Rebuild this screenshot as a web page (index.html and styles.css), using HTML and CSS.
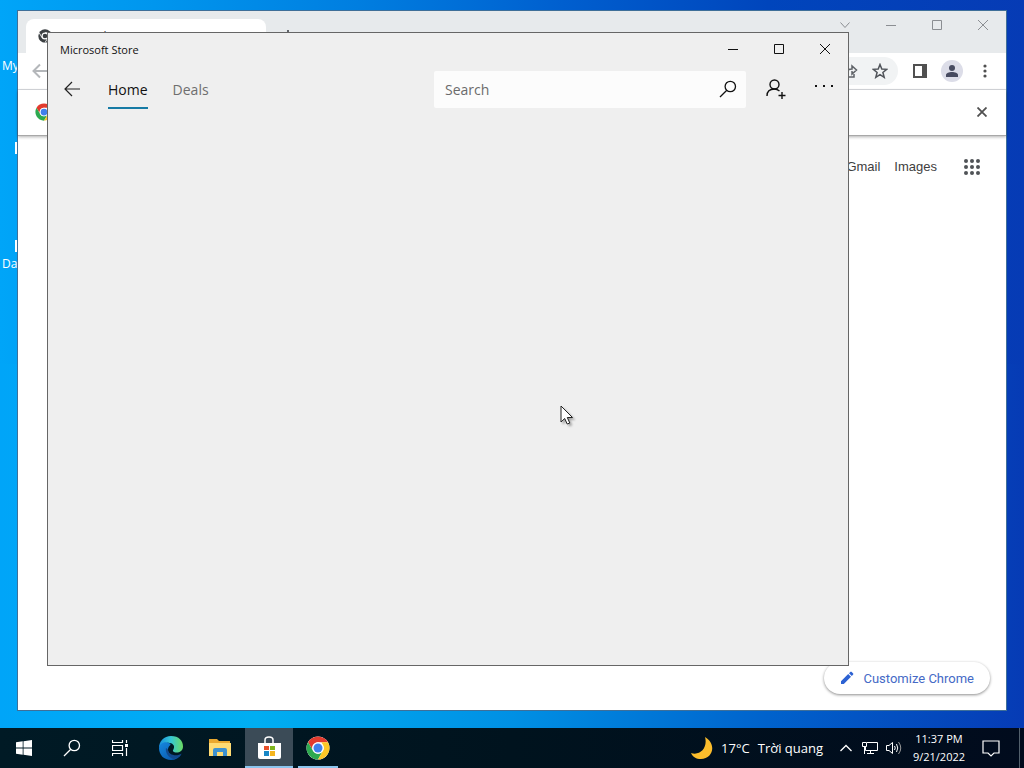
FILE: index.html
```html
<!DOCTYPE html>
<html lang="en">
<head>
  <meta charset="UTF-8" />
  <meta name="viewport" content="width=device-width, initial-scale=1.0" />
  <title>Desktop</title>
  <link rel="stylesheet" href="styles.css">
</head>
<body>
  <!-- Shared icons -->
  <svg class="sprite" aria-hidden="true">
    <symbol id="chrome-logo" viewBox="0 0 48 48">
      <circle cx="24" cy="24" r="23" fill="#fff"/>
      <path d="M4.1 12.5A23 23 0 0 1 43.9 12.5H24A11.5 11.5 0 0 0 14 29.7Z" fill="#e33b2e"/>
      <path d="M4.1 12.5L14 29.7A11.5 11.5 0 0 0 34 29.7L24 47A23 23 0 0 1 4.1 12.5Z" fill="#2da94f"/>
      <path d="M24 47L34 29.7A11.5 11.5 0 0 0 34 18.3L31 12.5H43.9A23 23 0 0 1 24 47Z" fill="#fdc727"/>
      <circle cx="24" cy="24" r="11.5" fill="#fff"/>
      <circle cx="24" cy="24" r="9" fill="#3f80ec"/>
    </symbol>
    <symbol id="minimize" viewBox="0 0 12 12"><path d="M1 6.5H11" fill="none" stroke="currentColor"/></symbol>
    <symbol id="maximize" viewBox="0 0 12 12"><path d="M1.500 1.500H10.500V10.500H1.500Z" fill="none" stroke="currentColor"/></symbol>
    <symbol id="close" viewBox="0 0 12 12"><path d="M1 1L11 11M11 1L1 11" fill="none" stroke="currentColor"/></symbol>
    <symbol id="search" viewBox="0 0 18 18"><path d="M1 17L7.300 10.700M16.500 6.500A5.200 5.200 0 1 1 6.100 6.500A5.200 5.200 0 1 1 16.500 6.500Z" fill="none" stroke="currentColor" stroke-width="1.300"/></symbol>
  </svg>

  <main class="desktop">
    <div class="shortcuts">
      <span class="shortcut">My</span>
      <span class="shortcut plain"></span>
      <span class="shortcut">Da</span>
    </div>

    <section class="browser" aria-label="Chrome">
      <div class="tabstrip">
        <div class="tab">
          <svg width="14" height="14" viewBox="0 0 48 48"><circle cx="24" cy="24" r="23" fill="#3c4043"/><circle cx="24" cy="24" r="10" fill="none" stroke="#fff" stroke-width="4"/><path d="M24 13H45M14 30L4 13M34 30L24 47" stroke="#fff" stroke-width="3"/></svg>
          <span>New Tab</span>
        </div>
        <button class="new-tab" aria-label="New tab"><svg width="12" height="12" viewBox="0 0 12 12"><path d="M6 0V12M0 6H12" stroke="#5f6368" stroke-width="2"/></svg></button>
        <div class="caption">
          <button aria-label="Search tabs"><svg width="12" height="12" viewBox="0 0 12 12"><path d="M1.500 3.500L6 8.500L10.500 3.500" fill="none" stroke="currentColor"/></svg></button>
          <button aria-label="Minimize"><svg width="12" height="12"><use href="#minimize"/></svg></button>
          <button aria-label="Maximize"><svg width="12" height="12"><use href="#maximize"/></svg></button>
          <button aria-label="Close"><svg width="12" height="12"><use href="#close"/></svg></button>
        </div>
      </div>
      <div class="toolbar">
        <button class="back" aria-label="Back"><svg width="16" height="16" viewBox="0 0 16 16"><path d="M15 8H2M8 1.500L1.500 8L8 14.500" fill="none" stroke="#b4b7ba" stroke-width="2"/></svg></button>
        <div class="omnibox">
          <button aria-label="Share"><svg width="16" height="16" viewBox="0 0 16 16"><path d="M6 3H2V14H12V11M5 10C5 7 7 6 10 6V3L14.500 7L10 11V8" fill="none" stroke="#5f6368" stroke-width="1.500"/></svg></button>
          <button aria-label="Bookmark"><svg width="16" height="16" viewBox="0 0 16 16"><path d="M8 1.500L9.800 6L14.700 6.300L10.900 9.500L12.200 14.300L8 11.600L3.800 14.300L5.100 9.500L1.300 6.300L6.200 6Z" fill="none" stroke="#50545a" stroke-width="1.500"/></svg></button>
        </div>
        <button class="panel" aria-label="Side panel"><svg width="16" height="16" viewBox="0 0 16 16"><path d="M1 1H15V15H1Z" fill="#505050"/><path d="M3 3H10V13H3Z" fill="#fff"/></svg></button>
        <button class="avatar" aria-label="Profile"><svg width="14" height="14" viewBox="0 0 14 14"><circle cx="7" cy="4" r="3" fill="#474b60"/><path d="M1 13V11C1 9 4 8 7 8S13 9 13 11V13Z" fill="#474b60"/></svg></button>
        <button class="menu" aria-label="Menu"><svg width="4" height="14" viewBox="0 0 4 14"><g fill="#505050"><circle cx="2" cy="2" r="1.600"/><circle cx="2" cy="7" r="1.600"/><circle cx="2" cy="12" r="1.600"/></g></svg></button>
      </div>
      <div class="infobar">
        <svg width="18" height="18"><use href="#chrome-logo"/></svg>
        <button aria-label="Dismiss"><svg width="10" height="10" viewBox="0 0 10 10"><path d="M0.500 0.500L9.500 9.500M9.500 0.500L0.500 9.500" stroke="#505050" stroke-width="1.800"/></svg></button>
      </div>
      <nav class="google-links">
        <a href="#">Gmail</a>
        <a href="#">Images</a>
        <button aria-label="Google apps"><svg width="16" height="16" viewBox="0 0 16 16"><g fill="#505357"><circle cx="2" cy="2" r="2"/><circle cx="8" cy="2" r="2"/><circle cx="14" cy="2" r="2"/><circle cx="2" cy="8" r="2"/><circle cx="8" cy="8" r="2"/><circle cx="14" cy="8" r="2"/><circle cx="2" cy="14" r="2"/><circle cx="8" cy="14" r="2"/><circle cx="14" cy="14" r="2"/></g></svg></button>
      </nav>
      <button class="customize">
        <svg width="14" height="14" viewBox="0 0 14 14"><path d="M1 10.200V13H3.800L11 5.800L8.200 3ZM9 2.200L10.500 0.800Q11 0.500 11.500 0.800L13.200 2.500Q13.500 3 13.200 3.500L11.800 5Z" fill="#2d62d3"/></svg>
        Customize Chrome
      </button>
    </section>

    <section class="store" aria-label="Microsoft Store">
      <header class="titlebar">
        <span>Microsoft Store</span>
        <div class="caption">
          <button aria-label="Minimize"><svg width="12" height="12"><use href="#minimize"/></svg></button>
          <button aria-label="Maximize"><svg width="12" height="12"><use href="#maximize"/></svg></button>
          <button aria-label="Close"><svg width="12" height="12"><use href="#close"/></svg></button>
        </div>
      </header>
      <div class="store-nav">
        <button class="icon-button" aria-label="Back"><svg width="16" height="16" viewBox="0 0 16 16"><path d="M16 8H1M8 1L1 8L8 15" fill="none" stroke="#222" stroke-width="1.200"/></svg></button>
        <nav class="store-tabs">
          <a class="active" href="#">Home</a>
          <a href="#">Deals</a>
        </nav>
        <form class="search-box">
          <input type="text" placeholder="Search" aria-label="Search" />
          <button type="button" aria-label="Submit search"><svg width="18" height="18"><use href="#search"/></svg></button>
        </form>
        <button class="icon-button" aria-label="Sign in"><svg width="20" height="20" viewBox="0 0 20 20"><g fill="none" stroke="#111" stroke-width="1.400"><circle cx="8.500" cy="5.500" r="4.500"/><path d="M1 17C1 12.500 4 10 8.500 10C10.500 10 12 10.800 13.500 12M16 13V20M12.500 16.500H19.500"/></g></svg></button>
        <button class="icon-button more" aria-label="See more"><svg width="20" height="4" viewBox="0 0 20 4"><path d="M1 1H3V3H1ZM9 1H11V3H9ZM17 1H19V3H17Z" fill="#111"/></svg></button>
      </div>
    </section>

    <svg class="cursor" width="14" height="21" viewBox="0 0 14 21"><path d="M1 1V17L4.700 13.500L7.200 19L9.800 18L7.300 12.500H12.500Z" fill="#fff" stroke="#222"/></svg>
  </main>

  <footer class="taskbar">
    <div class="system">
      <button aria-label="Start"><svg width="16" height="16" viewBox="0 0 16 16"><path d="M0 2.200L6.700 1.300V7.600H0ZM7.500 1.200L16 0V7.600H7.500ZM0 8.400H6.700V14.700L0 13.800ZM7.500 8.400H16V16L7.500 14.800Z" fill="#fff"/></svg></button>
      <button aria-label="Search"><svg width="18" height="18"><use href="#search"/></svg></button>
      <button aria-label="Task view"><svg width="16" height="16" viewBox="0 0 16 16"><path d="M0.500 0V2.500H10.500V0M0.500 5.500H10.500V10.500H0.500ZM0.500 16V13.500H10.500V16M14.500 0V3M14.500 8V16" fill="none" stroke="#fff" stroke-width="1.200"/><path d="M13 4H16V7H13Z" fill="#fff"/></svg></button>
    </div>
    <div class="apps">
      <button aria-label="Edge">
        <svg width="24" height="24" viewBox="0 0 24 24">
          <defs>
            <linearGradient id="edge-top" x1="0" x2="1"><stop offset="0" stop-color="#168dde"/><stop offset=".5" stop-color="#36c7d4"/><stop offset="1" stop-color="#6bdb62"/></linearGradient>
            <linearGradient id="edge-low" x1="0" x2="1" y2="1"><stop offset="0" stop-color="#1688df"/><stop offset="1" stop-color="#0750a4"/></linearGradient>
          </defs>
          <path d="M0 12C0 5 5 0 12 0C20 0 24 5 24 10.500C24 15 20 17 16.500 16.500C14 16 13.200 14.800 14.400 13.500C17 9 12 6 7.500 7C3 8 1 10 0 12Z" fill="url(#edge-top)"/>
          <path d="M0 12C1 7 6 5 10 7C14 9 9 9 9 14C9 20 18 22 22.500 18C20 22 16.500 24 12 24C5 24 0 19 0 12Z" fill="url(#edge-low)"/>
          <path d="M7 12C6 17 10 22 15 23C19 22 21.500 20 22.600 17.500C18 21 9 19 9 13.500Z" fill="#12498d"/>
        </svg>
      </button>
      <button aria-label="File Explorer">
        <svg width="22" height="20" viewBox="0 0 22 20"><path d="M0 1H8L10 3H21V18H0Z" fill="#eaa82f"/><path d="M0 5H22V18H0Z" fill="#ffdb73"/><path d="M4 18V12Q4 10 6 10H16Q18 10 18 12V18H14V14H8V18Z" fill="#3e91cf"/></svg>
      </button>
      <button class="current" aria-label="Microsoft Store">
        <svg width="24" height="24" viewBox="0 0 24 24"><path d="M8 8V4Q8 1 12 1T16 4V8" fill="none" stroke="#fff" stroke-width="1.500"/><path d="M1 7H24V21Q24 23 22 23H3Q1 23 1 21Z" fill="#fff"/><path d="M7 10H12V14H7Z" fill="#e6502b"/><path d="M13 10H18V14H13Z" fill="#7eb51e"/><path d="M7 15H12V20H7Z" fill="#1787c7"/><path d="M13 15H18V20H13Z" fill="#f5b51e"/></svg>
      </button>
      <button class="running" aria-label="Chrome"><svg width="24" height="24"><use href="#chrome-logo"/></svg></button>
    </div>
    <div class="tray">
      <button class="weather">
        <svg width="22" height="22" viewBox="0 0 22 22"><path d="M14 0C26 7 22 22 10 22C5 22 2 20 0 16C9 19 17 11 14 0Z" fill="#fbbd2c"/></svg>
        <span>17°C</span>
        <span>Trời quang</span>
      </button>
      <div class="tray-icons">
        <button aria-label="Show hidden icons"><svg width="12" height="8" viewBox="0 0 12 8"><path d="M0.500 7L6 1.500L11.500 7" fill="none" stroke="#fff" stroke-width="1.300"/></svg></button>
        <button aria-label="Network"><svg width="16" height="14" viewBox="0 0 16 14"><path d="M5 1.500H15.500V9.500H3.500V6M0.500 1.500H4.500V5.500H0.500ZM2.500 5.500V13M8.500 9.500V12.500M5 12.500H12" fill="none" stroke="#fff"/></svg></button>
        <button aria-label="Volume"><svg width="16" height="14" viewBox="0 0 16 14"><path d="M0.500 4.500H3L6.500 1.500V12.500L3 9.500H0.500ZM8.500 5Q10 7 8.500 9M10.500 3Q13 7 10.500 11" fill="none" stroke="#fff"/><path d="M12.500 1Q17 7 12.500 13" fill="none" stroke="#999"/></svg></button>
      </div>
      <button class="clock"><span>11:37 PM</span><span>9/21/2022</span></button>
      <button class="notifications" aria-label="Notifications"><svg width="18" height="18" viewBox="0 0 18 18"><path d="M1 2H17V14H12L9 17L6 14H1Z" fill="none" stroke="#fff" stroke-width="1.200"/></svg></button>
      <button class="show-desktop" aria-label="Show desktop"></button>
    </div>
  </footer>
</body>
</html>
```
FILE: styles.css
```css
* {
  margin: 0;
  padding: 0;
  box-sizing: border-box;
}

body {
  font-family: "Open Sans", "Noto Sans", sans-serif;
  font-size: 12px;
  height: 100vh;
  display: flex;
  flex-direction: column;
  overflow: hidden;
}

button {
  display: flex;
  align-items: center;
  justify-content: center;
  border: none;
  background: none;
  color: inherit;
  font: inherit;
  cursor: pointer;
}

a {
  color: inherit;
  text-decoration: none;
}

svg {
  display: block;
  flex-shrink: 0;
}

.sprite {
  position: absolute;
  width: 0;
  height: 0;
}

/* Desktop */
.desktop {
  flex: 1;
  position: relative;
  background:
    linear-gradient(90deg, #00a5f8, #0096ee 15%, #007ee0 35%, #005fcf 55%, #0045bc 75%, #063bb5) top / 100% 50% no-repeat,
    linear-gradient(90deg, #00a5f8, #00aef2 25%, #0090e4 50%, #0062cc 75%, #063bb5) bottom / 100% 50% no-repeat;
}

.shortcuts {
  padding: 56px 2px;
  display: flex;
  flex-direction: column;
  align-items: flex-start;
  color: #ffffff;
  font-size: 12px;
  line-height: 20px;
}

.shortcut {
  height: 86px;
}

/* only the right edges of these icons stick out */
.shortcut.plain {
  width: 15px;
  height: 112px;
  background:
    linear-gradient(#ffffff, #ffffff) right top / 2px 12px no-repeat,
    linear-gradient(#ffffff, #ffffff) right 98px / 2px 12px no-repeat;
}

/* Chrome window */
.browser {
  position: absolute;
  inset: 10px 17px 17px;
  border: 1px solid #3f6f98;
  background: #ffffff;
  display: flex;
  flex-direction: column;
}

.tabstrip {
  height: 42px;
  padding-left: 8px;
  background: #e7eaec;
  display: flex;
  align-items: flex-end;
  color: #3c4043;
}

.tab {
  width: 240px;
  height: 34px;
  padding: 0 12px;
  border-radius: 8px 8px 0 0;
  background: #ffffff;
  display: flex;
  align-items: center;
  gap: 10px;
}

.new-tab {
  width: 28px;
  height: 34px;
  margin-left: 8px;
}

.caption {
  margin-left: auto;
  display: flex;
  align-self: flex-start;
}

.caption button {
  width: 46px;
  height: 32px;
}

.tabstrip .caption {
  color: #8b8e92;
}

.tabstrip .caption button {
  height: 28px;
}

.toolbar {
  height: 37px;
  padding: 0 12px 0 14px;
  border-bottom: 1px solid #dadce0;
  display: flex;
  align-items: center;
}

.back {
  margin-right: 56px;
}

.omnibox {
  flex: 1;
  height: 28px;
  padding-right: 10px;
  border-radius: 14px;
  background: #f1f3f4;
  display: flex;
  align-items: center;
  justify-content: flex-end;
  gap: 14px;
}

.panel {
  margin-left: 14px;
}

.avatar {
  width: 22px;
  height: 22px;
  margin: 0 13px;
  border-radius: 50%;
  background: #dcdde8;
}

.menu {
  width: 18px;
}

.infobar {
  height: 46px;
  padding: 0 19px 2px 17px;
  border-bottom: 1px solid #a8a8a8;
  box-shadow: 0 1px 3px rgba(0, 0, 0, 0.3);
  display: flex;
  align-items: center;
  justify-content: space-between;
}

.google-links {
  padding: 22px 26px 0;
  display: flex;
  align-items: center;
  justify-content: flex-end;
  gap: 14px;
  color: #404040;
  font-family: "Liberation Sans", Arial, sans-serif;
  font-size: 13px;
  line-height: 18px;
}

.google-links button {
  margin-left: 13px;
}

.customize {
  align-self: flex-end;
  height: 32px;
  margin: auto 16px 16px;
  padding: 0 16px;
  gap: 9px;
  border-radius: 16px;
  box-shadow: 0 1px 3px rgba(0, 0, 0, 0.45);
  color: #456ac6;
  font-family: Roboto, sans-serif;
  font-size: 13px;
}

/* Store window */
.store {
  position: absolute;
  inset: 32px 175px 62px 47px;
  border: 1px solid #666666;
  background: #efefef;
  color: #111111;
}

.titlebar {
  height: 32px;
  padding-left: 12px;
  display: flex;
  align-items: center;
  font-size: 11px;
}

.store-nav {
  height: 48px;
  display: flex;
  align-items: center;
}

.icon-button {
  width: 48px;
  height: 48px;
}

.more {
  align-items: flex-start;
  padding-top: 19px;
}

.store-tabs {
  flex: 1;
  padding: 4px 0 0 12px;
  display: flex;
  gap: 25px;
  color: #6e6e6e;
  font-size: 14px;
  line-height: 34px;
}

.store-tabs a {
  border-bottom: 2px solid transparent;
}

.store-tabs .active {
  border-color: #177ba5;
  color: #111111;
}

.search-box {
  flex: 0 1 312px;
  height: 37px;
  margin-right: 6px;
  border-radius: 2px;
  background: #fcfcfc;
  display: flex;
}

.search-box input {
  flex: 1;
  min-width: 0;
  padding-left: 11px;
  border: none;
  outline: none;
  background: none;
  font: inherit;
  font-size: 14px;
}

.search-box input::placeholder {
  color: #6b6b6b;
}

.search-box button {
  width: 36px;
}

.cursor {
  position: absolute;
  top: 405px;
  left: 560px;
  filter: drop-shadow(2px 2px 1px rgba(0, 0, 0, 0.3));
}

/* Taskbar */
.taskbar {
  height: 40px;
  background: linear-gradient(90deg, #001a25, #00131e 50%, #010b1d);
  color: #ffffff;
  display: flex;
  justify-content: space-between;
}

.system,
.apps,
.tray,
.tray-icons {
  display: flex;
}

.system button,
.apps button {
  width: 48px;
  height: 40px;
}

.apps {
  flex: 1;
  margin-left: 3px;
  gap: 1px;
}

.apps .current {
  background: linear-gradient(#8bc5ee, #8bc5ee) bottom / 100% 2px no-repeat #3b4b57;
}

.apps .running {
  background: linear-gradient(#8bc5ee, #8bc5ee) bottom / 40px 2px no-repeat;
}

.weather {
  gap: 8px;
  margin-right: 11px;
  font-size: 13px;
}

.tray-icons button {
  width: 24px;
}

.clock {
  width: 66px;
  flex-direction: column;
  font-size: 11px;
  line-height: 18px;
}

.notifications {
  width: 38px;
}

.show-desktop {
  width: 5px;
  margin-left: 9px;
  border-left: 1px solid #53606c;
}
```
